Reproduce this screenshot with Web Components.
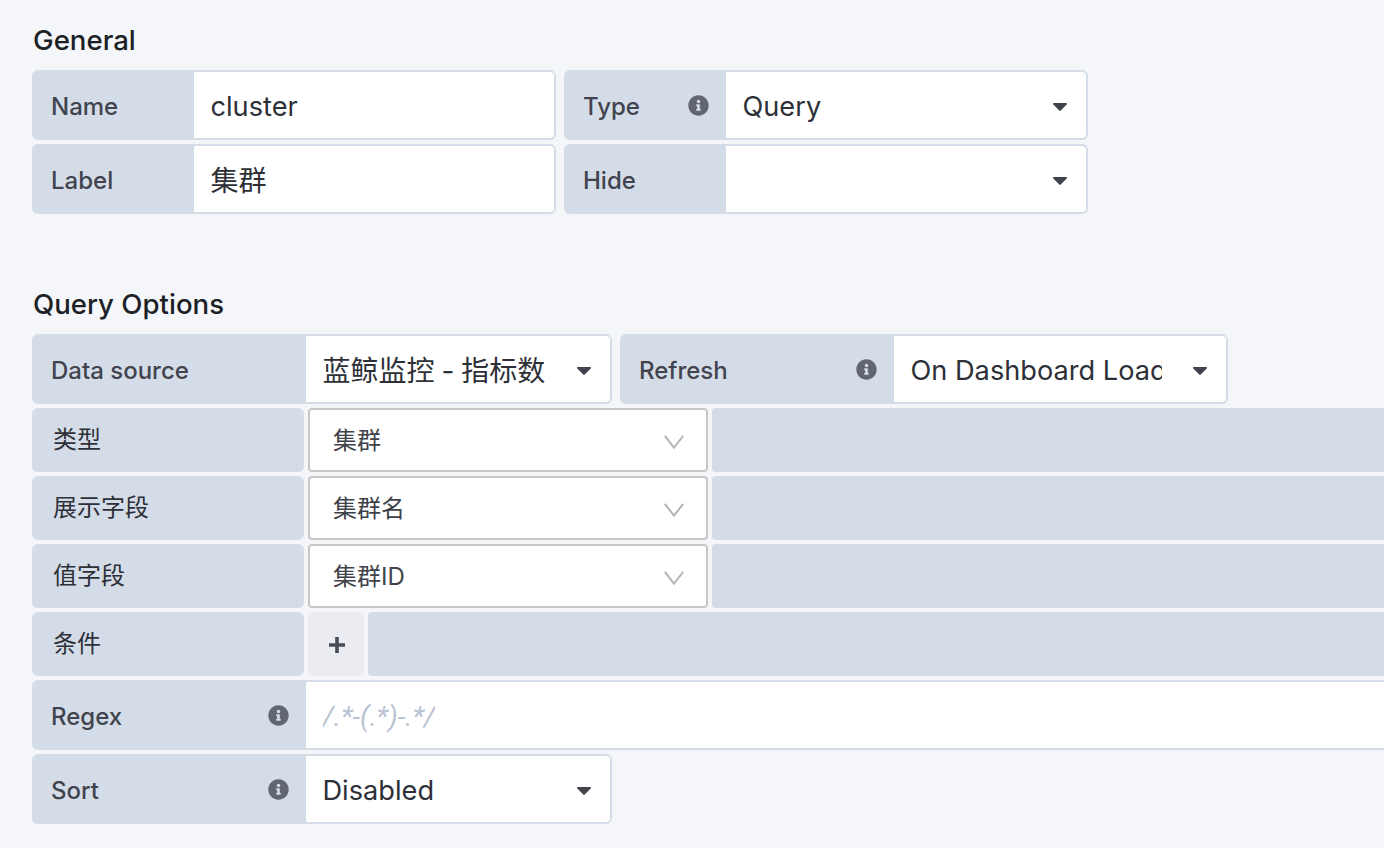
<!DOCTYPE html>
<html>
<head>
<meta charset="utf-8">
<title>Variable</title>
<style>
  html, body { margin: 0; height: 100%; overflow: hidden; }
  body {
    background: #f4f6fa;
    font-family: Inter, "Noto Sans CJK SC", sans-serif;
    color: #2e3038;
  }
</style>
</head>
<body>
<variable-editor></variable-editor>

<script>
const FIELD_BORDER = "#d5dce8";

const INFO_ICON = `<svg class="info" viewBox="0 0 512 512" width="21" height="21"><path fill="currentColor" d="M256 8C119.043 8 8 119.083 8 256c0 136.997 111.043 248 248 248s248-111.003 248-248C504 119.083 392.957 8 256 8zm0 110c23.196 0 42 18.804 42 42s-18.804 42-42 42-42-18.804-42-42 18.804-42 42-42zm56 254c0 6.627-5.373 12-12 12h-88c-6.627 0-12-5.373-12-12v-24c0-6.627 5.373-12 12-12h12v-64h-12c-6.627 0-12-5.373-12-12v-24c0-6.627 5.373-12 12-12h64c6.627 0 12 5.373 12 12v100h12c6.627 0 12 5.373 12 12v24z"/></svg>`;

class GfHeading extends HTMLElement {
  constructor() {
    super();
    this.attachShadow({ mode: "open" });
    this.shadowRoot.innerHTML = `
      <style>
        :host {
          display: block;
          font-size: 27.6px;
          font-weight: 500;
          line-height: 32px;
          color: #1d1f26;
          padding-left: 1px;
        }
      </style>
      <slot></slot>
    `;
  }
}

class GfField extends HTMLElement {
  constructor() {
    super();
    this.attachShadow({ mode: "open" });
  }

  connectedCallback() {
    this.render();
  }

  render() {
    const label = this.getAttribute("label") || "";
    const labelWidth = this.getAttribute("label-width") || 162;
    const width = this.getAttribute("width") || 524;
    const value = this.getAttribute("value") || "";
    const kind = this.getAttribute("kind") || "input";
    const valueWidth = this.getAttribute("value-width");
    const info = this.hasAttribute("info") ? INFO_ICON : "";
    const cjk = this.hasAttribute("cjk") ? "cjk" : "";
    const caret = kind === "select"
      ? `<svg class="caret" viewBox="0 0 14 8" width="14" height="8"><path fill="#41434c" d="M1 0h12c.9 0 1.3 1 .7 1.6L7.7 7.6c-.4.4-1 .4-1.4 0L.3 1.6C-.3 1 .1 0 1 0z"/></svg>`
      : "";
    this.shadowRoot.innerHTML = `
      <style>
        :host {
          display: flex;
          flex: none;
          box-sizing: border-box;
          width: ${width}px;
          height: 70px;
          font-size: 24px;
        }
        .label {
          flex: none;
          box-sizing: border-box;
          width: ${labelWidth}px;
          display: flex;
          align-items: center;
          justify-content: space-between;
          padding: 0 17px 0 19px;
          background: #d4dce8;
          color: #41444e;
          font-weight: 500;
          border-radius: 6px 0 0 6px;
        }
        .label span { margin-top: 2px; }
        .info { color: #626671; flex: none; }
        .box {
          flex: 1;
          min-width: 0;
          box-sizing: border-box;
          display: flex;
          align-items: center;
          justify-content: space-between;
          padding: 0 19px 0 16.5px;
          background: #fff;
          border: 2px solid ${FIELD_BORDER};
          border-left: 0;
          border-radius: 0 6px 6px 0;
          font-size: 27.2px;
          color: #2e3038;
        }
        .value {
          white-space: nowrap;
          overflow: hidden;
          margin-top: 2px;
          ${valueWidth ? `width: ${valueWidth}px; flex: none;` : ""}
        }
        .value.cjk { font-size: 28px; margin-top: 0; word-spacing: -1px; }
        .placeholder { font-family: Roboto, sans-serif; font-size: 28px; font-style: italic; color: #b9c3d2; }
        .caret { flex: none; margin-top: 4px; }
      </style>
      <div class="label"><span>${label}</span>${info}</div>
      <div class="box">
        <span class="value ${cjk} ${kind === "placeholder" ? "placeholder" : ""}">${value}</span>${caret}
      </div>
    `;
  }
}

class GfQueryRow extends HTMLElement {
  constructor() {
    super();
    this.attachShadow({ mode: "open" });
  }

  connectedCallback() {
    const label = this.getAttribute("label") || "";
    const value = this.getAttribute("value");
    const control = value !== null
      ? `<div class="select"><span>${value}</span>
           <svg viewBox="0 0 20 14" width="20" height="14"><path fill="none" stroke="#b4b4b4" stroke-width="2" d="M.8.8 10 12.6 19.2.8"/></svg>
         </div>`
      : `<div class="add"><svg viewBox="0 0 16 16" width="16" height="16"><path fill="#494c57" d="M6.2 0h3.6v6.2H16v3.6H9.8V16H6.2V9.8H0V6.2h6.2z"/></svg></div>`;
    this.shadowRoot.innerHTML = `
      <style>
        :host {
          display: flex;
          gap: 4px;
          height: 64px;
          font-size: 24px;
          color: #2e3038;
        }
        .label {
          flex: none;
          box-sizing: border-box;
          width: 272px;
          display: flex;
          align-items: center;
          padding: 0 0 6px 21px;
          background: #d4dce8;
          border-radius: 6px;
        }
        .select {
          flex: none;
          box-sizing: border-box;
          width: 400px;
          display: flex;
          align-items: center;
          justify-content: space-between;
          padding: 0 22px 0 23px;
          background: #fff;
          border: 2px solid #c8c8c8;
          border-radius: 4px;
          color: #40424a;
        }
        .select span { margin-bottom: 4px; }
        .select svg { margin-top: 3px; }
        .add {
          flex: none;
          width: 56px;
          display: flex;
          align-items: center;
          justify-content: center;
          padding-left: 2px;
          box-sizing: border-box;
          background: #eaecf2;
          border-radius: 4px;
        }
        .add svg { margin-top: 2px; }
        .fill {
          flex: 1;
          background: #d4dce8;
          border-radius: 4px 0 0 4px;
        }
      </style>
      <div class="label">${label}</div>
      ${control}
      <div class="fill"></div>
    `;
  }
}

class GfFieldRow extends HTMLElement {
  constructor() {
    super();
    this.attachShadow({ mode: "open" });
    this.shadowRoot.innerHTML = `
      <style>
        :host { display: flex; gap: 8px; }
      </style>
      <slot></slot>
    `;
  }
}

class VariableEditor extends HTMLElement {
  constructor() {
    super();
    this.attachShadow({ mode: "open" });
    this.shadowRoot.innerHTML = `
      <style>
        :host {
          display: block;
          box-sizing: border-box;
          width: 1384px;
          height: 848px;
          overflow: hidden;
          padding: 24px 0 0 32px;
        }
        section { display: flex; flex-direction: column; gap: 4px; }
        gf-heading { margin-bottom: 10px; }
        section + section { margin-top: 74px; }
      </style>
      <section>
        <gf-heading>General</gf-heading>
        <gf-field-row>
          <gf-field label="Name" value="cluster"></gf-field>
          <gf-field label="Type" info value="Query" kind="select"></gf-field>
        </gf-field-row>
        <gf-field-row>
          <gf-field label="Label" cjk value="集群"></gf-field>
          <gf-field label="Hide" kind="select"></gf-field>
        </gf-field-row>
      </section>
      <section>
        <gf-heading>Query Options</gf-heading>
        <gf-field-row>
          <gf-field label="Data source" label-width="274" width="580" cjk value="蓝鲸监控 - 指标数" value-width="240" kind="select"></gf-field>
          <gf-field label="Refresh" info label-width="274" width="608" value="On Dashboard Load" value-width="251" kind="select"></gf-field>
        </gf-field-row>
        <gf-query-row label="类型" value="集群"></gf-query-row>
        <gf-query-row label="展示字段" value="集群名"></gf-query-row>
        <gf-query-row label="值字段" value="集群ID"></gf-query-row>
        <gf-query-row label="条件"></gf-query-row>
        <gf-field label="Regex" info label-width="274" width="1400" value="/.*-(.*)-.*/" kind="placeholder"></gf-field>
        <gf-field label="Sort" info label-width="274" width="580" value="Disabled" kind="select"></gf-field>
      </section>
    `;
  }
}

customElements.define("gf-heading", GfHeading);
customElements.define("gf-field", GfField);
customElements.define("gf-query-row", GfQueryRow);
customElements.define("gf-field-row", GfFieldRow);
customElements.define("variable-editor", VariableEditor);
</script>
</body>
</html>
